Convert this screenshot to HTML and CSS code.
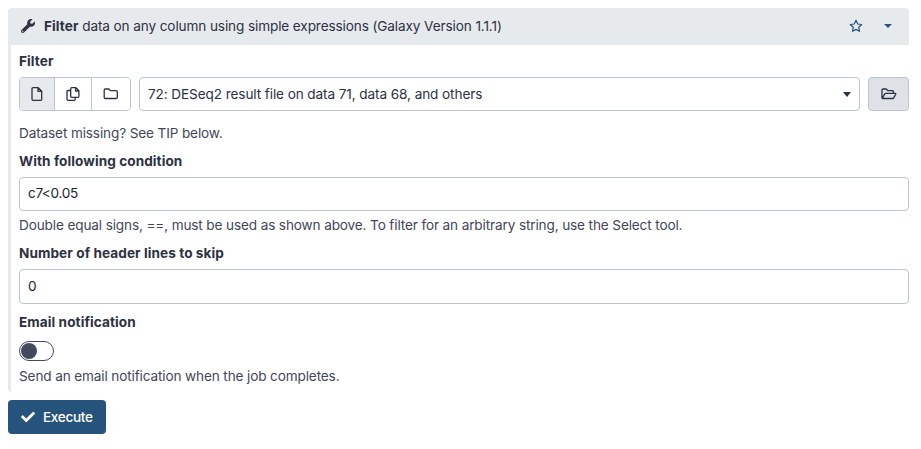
FILE: index.html
```html
<!DOCTYPE html>
<html lang="en">
<head>
<meta charset="utf-8">
<title>Filter</title>
<link rel="stylesheet" href="styles.css">
</head>
<body>
<form class="tool">
  <section class="card">
    <header class="card-header">
      <svg class="wrench" viewBox="0 0 512 512"><path fill="currentColor" d="M507.700 109.100c-2.200-9-13.500-12.100-20.100-5.500l-74.400 74.400-67.900-11.300L334 98.900l74.400-74.400c6.600-6.600 3.400-17.900-5.700-20.200-47.400-11.700-99.600.900-136.600 37.900-39.600 39.600-50.500 97.100-34.100 147.200L18.700 402.800c-25 25-25 65.500 0 90.500s65.500 25 90.500 0l213.200-213.200c50.100 16.700 107.500 5.700 147.400-34.200 37.100-37.100 49.700-89.300 37.900-136.800zM64 472a24 24 0 1 1 0-48 24 24 0 0 1 0 48z"/></svg>
      <h1 class="title"><b>Filter</b> data on any column using simple expressions (Galaxy Version 1.1.1)</h1>
      <svg class="star" viewBox="0 0 14 14"><path d="M7 1.300 8.700 5l4 .5-2.900 2.800.7 4L7 10.400l-3.500 1.900.7-4L1.300 5.500l4-.5z"/></svg>
      <span class="caret caret-blue"></span>
    </header>
    <div class="card-body">
      <div class="label">Filter</div>
      <div class="data-row">
        <div class="group">
          <button type="button" class="source active"><svg class="line-icon" width="12" height="16" viewBox="0 0 12 16"><path d="M2 1.700h5.300l3.400 3.500v8.100q0 1-1 1H2q-1 0-1-1V2.700q0-1 1-1zM7 1.700v3.600h3.700"/></svg></button>
          <button type="button" class="source"><svg class="line-icon" width="14" height="16" viewBox="0 0 14 16"><path d="M5.700 1.700h4.200l3 3v5.600q0 1-1 1H5.700q-1 0-1-1V2.700q0-1 1-1zM9.600 1.700V5h3.300M4.700 4.500H2q-1 0-1 1v7.800q0 1 1 1h6.200q1 0 1-1v-2"/></svg></button>
          <button type="button" class="source"><svg class="line-icon" width="16" height="14" viewBox="0 0 16 14"><path d="M2.300 2h3.500l1.700 1.700h5.700q1.100 0 1.100 1.100v5.700q0 1-1.100 1H2.300q-1.100 0-1.100-1V3q0-1 1.100-1z"/></svg></button>
        </div>
        <div class="select"><span>72: DESeq2 result file on data 71, data 68, and others</span><span class="caret"></span></div>
        <button type="button" class="browse"><svg class="line-icon" width="16" height="14" viewBox="0 0 16 14"><path d="M1 11V3q0-1 1-1h3.200l1.700 1.700h4.500q1 0 1 1v1.600M1.200 11.500l2.600-4.600q.3-.6 1-.6h9.300q1 0 .6.900l-2 3.700q-.3.600-1 .6z"/></svg></button>
      </div>
      <div class="help data-help">Dataset missing? See TIP below.</div>
      <div class="label">With following condition</div>
      <input class="field" type="text" value="c7&lt;0.05">
      <div class="help">Double equal signs, ==, must be used as shown above. To filter for an arbitrary string, use the Select tool.</div>
      <div class="label">Number of header lines to skip</div>
      <input class="field number" type="text" value="0">
      <div class="label">Email notification</div>
      <div class="switch"><span class="knob"></span></div>
      <div class="help">Send an email notification when the job completes.</div>
    </div>
  </section>
  <button type="button" class="execute"><svg width="14" height="14" viewBox="0 0 512 512"><path fill="currentColor" d="M173.900 439.400 7.500 273c-10-10-10-26.200 0-36.200l36.200-36.200c10-10 26.200-10 36.200 0L192 312.700 432.100 72.600c10-10 26.200-10 36.200 0l36.200 36.200c10 10 10 26.200 0 36.200L210.100 439.400c-10 10-26.200 10-36.200 0z"/></svg>Execute</button>
</form>
</body>
</html>
```
FILE: styles.css
```css
* { box-sizing: border-box; }
body {
  margin: 0;
  padding: 8px 12px 0 8px;
  background: #fff;
  color: #2c3143;
  font: 13.600px/20px Inter, "Liberation Sans", sans-serif;
}
svg { display: block; flex: none; }
button { font: inherit; color: inherit; padding: 0; margin: 0; }
.card {
  height: 384px;
  border-left: 3px solid #e7eaed;
  border-radius: 4px;
}
.card-header {
  display: flex;
  align-items: center;
  height: 37px;
  margin-left: -3px;
  padding: 0 16px 0 13px;
  background: #e7eaed;
  border-radius: 4px 4px 0 0;
}
.wrench { width: 14px; height: 14px; margin-top: -2px; }
.title {
  flex: 1;
  margin: -1px 0 0 9px;
  font-size: inherit;
  font-weight: 400;
  letter-spacing: -0.115px;
  white-space: nowrap;
}
.title b { font-weight: 700; letter-spacing: 0.080px; }
.star { width: 14px; height: 14px; margin: -2px 21px 0 0; fill: none; stroke: #25537b; stroke-width: 1.200; stroke-linejoin: round; }
.caret { border: 4px solid transparent; border-top: 5px solid #2c3143; border-bottom: 0; }
.caret-blue { border-width: 4px 4px 0; border-top-color: #25537b; margin: -2px 1px 0 0; }
.card-body { padding: 6px 0 0 8px; }
.label { margin-bottom: 6px; font-weight: 700; letter-spacing: 0.080px; }
.data-row { display: flex; gap: 8px; height: 34px; }
.group {
  display: flex;
  width: 112px;
  border: 1px solid #bdc6d0;
  border-radius: 4px;
  overflow: hidden;
}
.source {
  display: flex;
  align-items: center;
  justify-content: center;
  flex: 0 0 37px;
  background: #fff;
  border: 0;
  border-right: 1px solid #bdc6d0;
}
.source.active { flex-basis: 35px; background: #e7eaed; }
.source:last-child { flex: 1; border-right: 0; }
.line-icon { fill: none; stroke: #2c3143; stroke-width: 1.300; stroke-linejoin: round; }
.select {
  display: flex;
  flex: 1;
  align-items: center;
  justify-content: space-between;
  padding: 0 8px;
  border: 1px solid #bdc6d0;
  border-radius: 4px;
  letter-spacing: -0.100px;
}
.browse {
  display: flex;
  align-items: center;
  justify-content: center;
  width: 41px;
  background: #dee2e6;
  border: 1px solid #bdc6d0;
  border-radius: 4px;
}
.help { margin: 4px 0 8px; color: #41465a; letter-spacing: -0.135px; }
.data-help { margin-top: 12px; }
.field {
  display: block;
  width: 100%;
  height: 34px;
  padding: 0 8px 2px;
  border: 1px solid #bdc6d0;
  border-radius: 4px;
  background: #fff;
  color: #212529;
  font: inherit;
  letter-spacing: -0.250px;
}
.number { height: 35px; margin-bottom: 8px; }
.switch {
  width: 35px;
  height: 20px;
  margin: 9px 0 5px;
  padding: 1px;
  border: 1px solid #434a60;
  border-radius: 10px;
}
.knob { display: block; width: 16px; height: 16px; border-radius: 50%; background: #434a60; }
.execute {
  display: flex;
  align-items: center;
  gap: 8px;
  width: 98px;
  height: 34px;
  margin-top: 8px;
  padding-left: 13px;
  border: 0;
  border-radius: 4px;
  background: #25537b;
  color: #fff;
  font-weight: 500;
  letter-spacing: -0.350px;
}
```
